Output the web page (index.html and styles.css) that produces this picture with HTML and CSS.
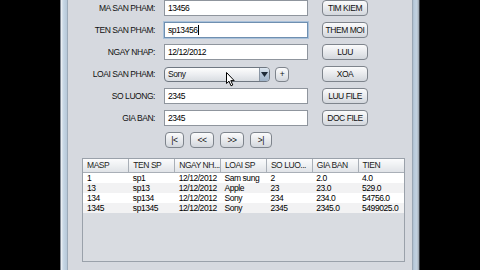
FILE: index.html
```html
<!DOCTYPE html>
<html>
<head>
    <meta charset="UTF-8">
    <title>Quan ly san pham</title>
    <link rel="stylesheet" href="styles.css">
</head>
<body>
<div class="screen">
    <div class="frame">
        <div class="panel">
            <!-- form nhap lieu -->
            <div class="form">
                <label class="lbl">MA SAN PHAM:</label>
                <div class="field">13456</div>
                <div class="btn">TIM KIEM</div>

                <label class="lbl">TEN SAN PHAM:</label>
                <div class="field focus">sp13456<span class="caret"></span></div>
                <div class="btn">THEM MOI</div>

                <label class="lbl">NGAY NHAP:</label>
                <div class="field">12/12/2012</div>
                <div class="btn">LUU</div>

                <label class="lbl">LOAI SAN PHAM:</label>
                <div class="combo_row">
                    <div class="combo">
                        <span class="combo_text">Sony</span>
                        <span class="combo_arrow">
                            <svg width="7" height="5" viewBox="0 0 7 5"><path d="M0 0H7L3.5 5Z" fill="#1d2a38"/></svg>
                        </span>
                    </div>
                    <div class="btn btn_plus">+</div>
                </div>
                <div class="btn">XOA</div>

                <label class="lbl">SO LUONG:</label>
                <div class="field">2345</div>
                <div class="btn">LUU FILE</div>

                <label class="lbl">GIA BAN:</label>
                <div class="field">2345</div>
                <div class="btn">DOC FILE</div>
            </div>

            <div class="nav">
                <div class="btn nav_first">|&lt;</div>
                <div class="btn nav_mid">&lt;&lt;</div>
                <div class="btn nav_mid">&gt;&gt;</div>
                <div class="btn nav_last">&gt;|</div>
            </div>

            <!-- bang san pham -->
            <div class="table_wrap">
                <table class="grid">
                    <thead>
                    <tr>
                        <th>MASP</th>
                        <th>TEN SP</th>
                        <th>NGAY NH...</th>
                        <th>LOAI SP</th>
                        <th>SO LUO...</th>
                        <th>GIA BAN</th>
                        <th>TIEN</th>
                    </tr>
                    </thead>
                    <tbody>
                    <tr>
                        <td>1</td><td>sp1</td><td>12/12/2012</td><td>Sam sung</td><td>2</td><td>2.0</td><td>4.0</td>
                    </tr>
                    <tr>
                        <td>13</td><td>sp13</td><td>12/12/2012</td><td>Apple</td><td>23</td><td>23.0</td><td>529.0</td>
                    </tr>
                    <tr>
                        <td>134</td><td>sp134</td><td>12/12/2012</td><td>Sony</td><td>234</td><td>234.0</td><td>54756.0</td>
                    </tr>
                    <tr>
                        <td>1345</td><td>sp1345</td><td>12/12/2012</td><td>Sony</td><td>2345</td><td>2345.0</td><td>5499025.0</td>
                    </tr>
                    </tbody>
                </table>
            </div>
        </div>
    </div>

    <svg class="mouse" width="10" height="15" viewBox="0 0 10 15">
        <path d="M0.5 0.5V11.5L3 9.2L5 13.8L6.8 13L4.8 8.6H8.2Z" fill="#fff" stroke="#000" stroke-width="1"/>
    </svg>
</div>
</body>
</html>
```

FILE: styles.css
```css
* {
    margin: 0px;
    padding: 0px;
    box-sizing: border-box;
}

body {
    background-color: #000;
    font-family: "Liberation Sans", Arial, sans-serif;
    font-size: 8.5px;
    letter-spacing: -0.45px;
    color: #111;
}

.screen {
    width: 480px;
    height: 270px;
    position: relative;
    padding-left: 60px;
    overflow: hidden;
}

.frame {
    width: 360px;
    height: 270px;
    background-color: #d6d9df;
    border-left: 1px solid #7d8590;
    border-right: 1px solid #3a3f46;
    display: flex;
}

.frame::before {
    content: "";
    width: 7px;
    background: linear-gradient(to right, #f2f5f8, #c9d8e6 30%, #b7c9da 80%, #8d99a6);
}

.frame::after {
    content: "";
    width: 7px;
    background: linear-gradient(to right, #8d99a6, #b7c9da 25%, #c3d2e0 70%, #9aa2ab);
}

.panel {
    flex: 1;
    display: flex;
    flex-direction: column;
}

.form {
    display: grid;
    grid-template-columns: 87px 144px 51px;
    grid-auto-rows: 16px;
    column-gap: 9px;
    row-gap: 6px;
}

.lbl {
    text-align: right;
    line-height: 16px;
    color: #111;
}

.field {
    background-color: #fff;
    border: 1px solid #8f959d;
    padding-left: 3px;
    line-height: 14px;
    color: #000;
}

.field.focus {
    border-color: #6f8fb0;
    box-shadow: 0 0 0 1px #a9c1da;
}

.caret {
    display: inline-block;
    width: 1px;
    height: 10px;
    margin-left: 1px;
    background-color: #000;
    vertical-align: -2px;
}

.btn {
    border: 1px solid #7e848c;
    border-radius: 4px;
    background: linear-gradient(#fbfbfc, #e8eaed 50%, #d3d7dd);
    text-align: center;
    line-height: 14px;
    color: #111;
    white-space: nowrap;
}

.form > .btn {
    margin-left: 5px;
}

.combo_row {
    display: flex;
    gap: 5px;
}

.combo {
    width: 106px;
    height: 15px;
    margin-top: 1px;
    border: 1px solid #6f7781;
    border-radius: 4px;
    background: linear-gradient(#fdfdfd, #eceef1 50%, #d9dde2);
    display: flex;
    overflow: hidden;
}

.combo_text {
    flex: 1;
    padding-left: 3px;
    line-height: 13px;
}

.combo_arrow {
    width: 10px;
    border-left: 1px solid #8a96a4;
    background: linear-gradient(#dfe8f1, #b5c6d8 50%, #9fb3c8);
    display: flex;
    align-items: center;
    justify-content: center;
}

.btn_plus {
    width: 14px;
    height: 15px;
    margin-top: 1px;
    line-height: 13px;
}

.nav {
    display: flex;
    gap: 6px;
    margin-top: 6px;
    padding-left: 97px;
    height: 16px;
}

.nav_first {
    width: 19px;
}

.nav_mid {
    width: 24px;
}

.nav_last {
    width: 22px;
}

.table_wrap {
    margin-top: 10px;
    margin-left: 14px;
    width: 323px;
    height: 104px;
    border: 1px solid #9aa1aa;
    background-color: #d9dce1;
}

.grid {
    width: 100%;
    border-collapse: collapse;
    table-layout: fixed;
}

.grid th {
    height: 13px;
    font-weight: normal;
    text-align: left;
    padding-left: 4px;
    color: #222;
    background: linear-gradient(#fbfbfc, #eef0f2 50%, #e0e3e7);
    border-right: 1px solid #a9afb7;
    border-bottom: 1px solid #a9afb7;
    white-space: nowrap;
    overflow: hidden;
}

.grid th:last-child {
    border-right: none;
}

.grid td {
    height: 10px;
    line-height: 10px;
    padding-left: 4px;
    white-space: nowrap;
    overflow: hidden;
    color: #000;
}

.grid tbody tr:nth-child(odd) {
    background-color: #fff;
}

.grid tbody tr:nth-child(even) {
    background-color: #f2f2f3;
}

.mouse {
    position: absolute;
    left: 226px;
    top: 72px;
}
```
